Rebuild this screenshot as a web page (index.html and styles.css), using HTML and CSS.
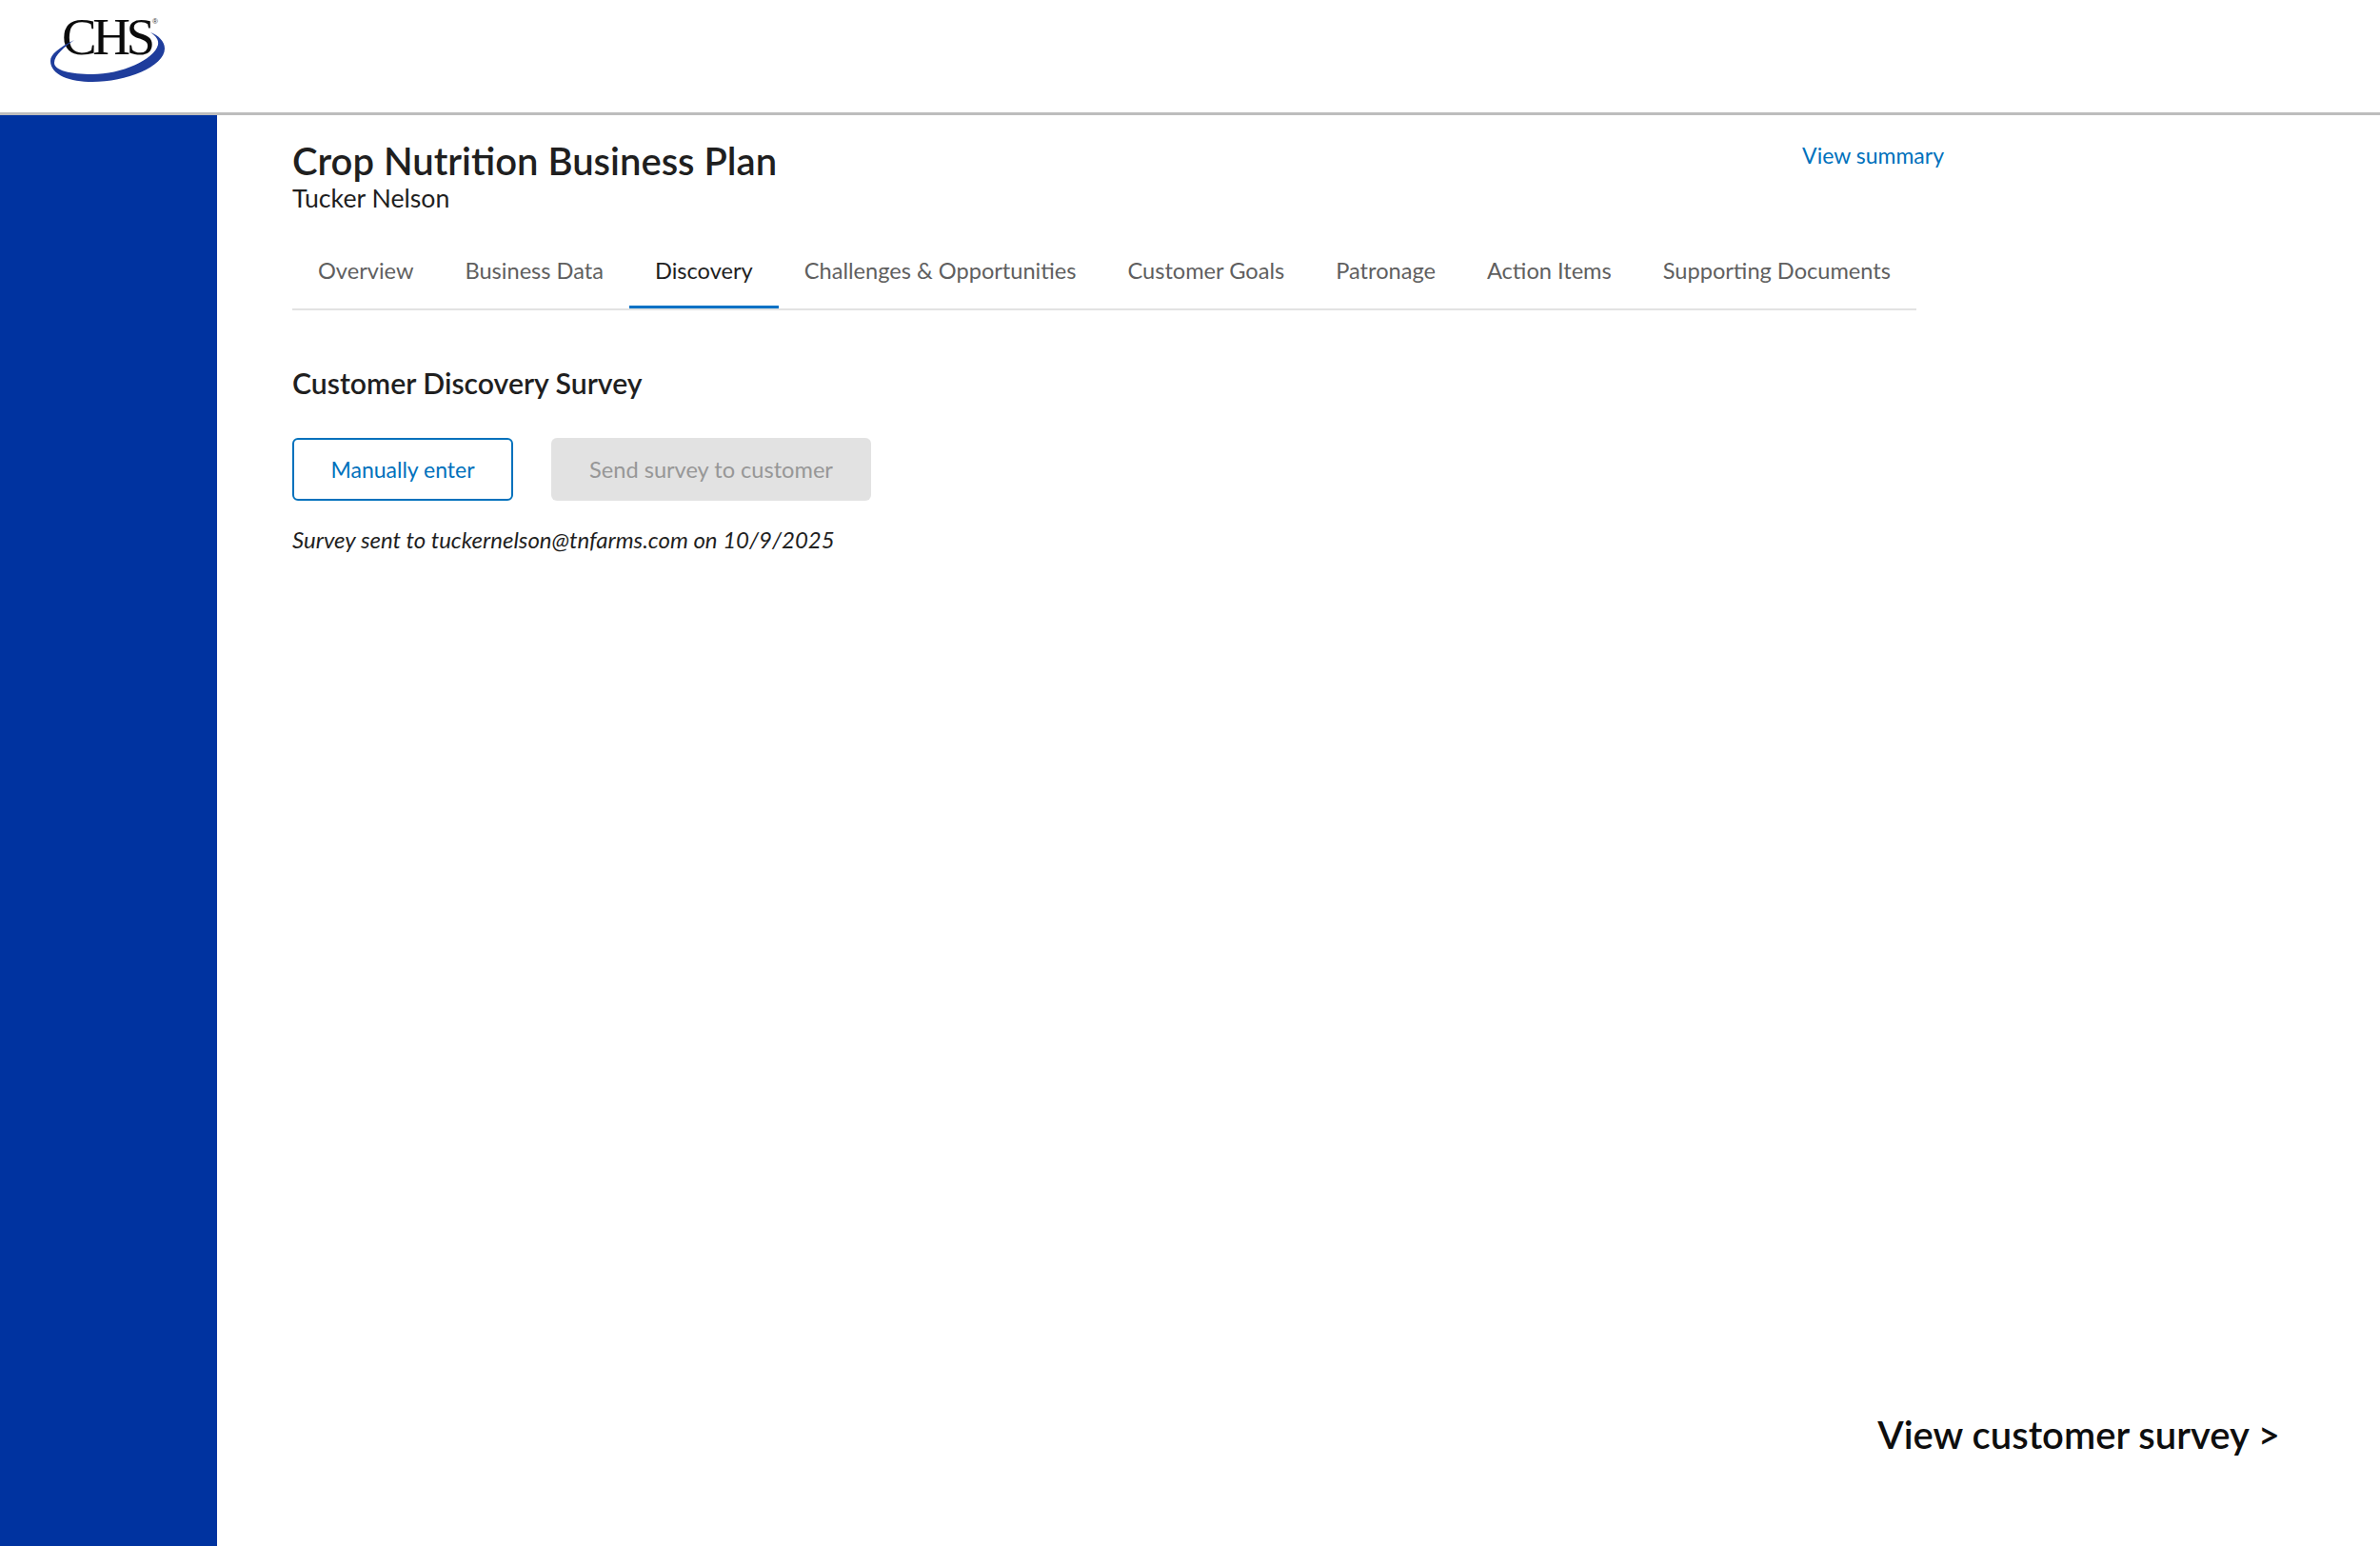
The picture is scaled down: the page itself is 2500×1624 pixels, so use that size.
FILE: index.html
```html
<!DOCTYPE html>
<html lang="en">
<head>
<meta charset="utf-8">
<title>Crop Nutrition Business Plan</title>
<link rel="stylesheet" href="styles.css">
</head>
<body>
<div class="page">
  <header class="topbar">
    <div class="logo">
      <span class="logo-text">CHS</span>
      <span class="logo-reg">®</span>
      <svg class="logo-swoosh" width="125" height="60" viewBox="0 0 125 60" aria-hidden="true">
        <path d="M26 12 C10 20 1 27 1 34 C1 49 22 56 45 56 C80 56 121 40 121 21 C121 13 114 7 106 4 C112 8 115 12 114 17 C110 33 75 48 45 48 C22 48 5 44 5 36 C5 28 16 19 26 12 Z" fill="#1f3d9c"/>
      </svg>
    </div>
  </header>
  <div class="body-row">
    <aside class="sidebar"></aside>
    <main class="main">
      <div class="title-row">
        <div>
          <h1 class="title">Crop Nutrition Business Plan</h1>
          <div class="subtitle">Tucker Nelson</div>
        </div>
        <a class="summary-link">View summary</a>
      </div>
      <nav class="tabs">
        <a class="tab">Overview</a>
        <a class="tab">Business Data</a>
        <a class="tab tab-active">Discovery</a>
        <a class="tab">Challenges &amp; Opportunities</a>
        <a class="tab">Customer Goals</a>
        <a class="tab">Patronage</a>
        <a class="tab">Action Items</a>
        <a class="tab">Supporting Documents</a>
      </nav>
      <h2 class="section-title">Customer Discovery Survey</h2>
      <div class="actions">
        <button class="btn btn-outline">Manually enter</button>
        <button class="btn btn-disabled">Send survey to customer</button>
      </div>
      <p class="note">Survey sent to tuckernelson@tnfarms.com on 10/9/2025</p>
      <a class="survey-link">View customer survey &gt;</a>
    </main>
  </div>
</div>
</body>
</html>
```
FILE: styles.css
```css
* { box-sizing: border-box; }
html, body { margin: 0; padding: 0; background: #fff; }
body { font-family: "Lato", "Liberation Sans", sans-serif; color: #1f1f1f; }
.page { width: 2500px; height: 1624px; display: flex; flex-direction: column; overflow: hidden; }
.topbar { height: 121px; flex: none; border-bottom: 3px solid #bdbdbd; padding: 14px 0 0 52px; }
.logo { position: relative; width: 125px; height: 72px; }
.logo-swoosh { position: absolute; left: 0; top: 16px; }
.logo-text { position: absolute; left: 13px; top: -5px; font: 55px/60px "Liberation Serif", serif; letter-spacing: -4.5px; color: #0b0b0b; }
.logo-reg { position: absolute; left: 108px; top: 4px; font: 8px/10px "Liberation Sans", sans-serif; color: #333; }
.body-row { flex: 1; display: flex; min-height: 0; }
.sidebar { width: 228px; flex: none; background: #0033a0; }
.main { flex: 1; display: flex; flex-direction: column; padding: 25px 105px 93px 79px; }
.title-row { width: 1735px; display: flex; justify-content: space-between; align-items: flex-start; }
.title { margin: 0; font-size: 40px; line-height: 46px; font-weight: 600; color: #1f1f1f; }
.subtitle { font-size: 26.7px; line-height: 30px; margin-top: 1px; color: #1f1f1f; }
.summary-link { font-size: 23px; line-height: 28px; color: #0071bc; margin-top: 3px; }
.tabs { width: 1706px; display: flex; margin-top: 28px; border-bottom: 2px solid #e2e2e2; }
.tab { padding: 19px 27px 23px; font-size: 23.6px; line-height: 28px; color: #5f5f5f; border-bottom: 3px solid transparent; white-space: nowrap; }
.tab-active { color: #1f1f1f; border-bottom-color: #0071c5; }
.section-title { margin: 58px 0 0; font-size: 30.2px; line-height: 36px; font-weight: 600; color: #1f1f1f; }
.actions { display: flex; gap: 40px; margin-top: 40px; }
.btn { height: 66px; padding: 0; font-family: inherit; border-radius: 6px; }
.btn-outline { width: 232px; font-size: 23px; background: #fff; border: 2px solid #0071bc; color: #0071bc; }
.btn-disabled { width: 336px; font-size: 23.6px; background: #e2e2e2; border: 0; color: #979797; }
.note { margin: 27px 0 0; font-size: 24px; line-height: 28px; font-style: italic; color: #1f1f1f; }
.survey-link { margin-top: auto; align-self: flex-end; font-size: 40px; line-height: 48px; font-weight: 600; color: #0e0e0e; }
```
